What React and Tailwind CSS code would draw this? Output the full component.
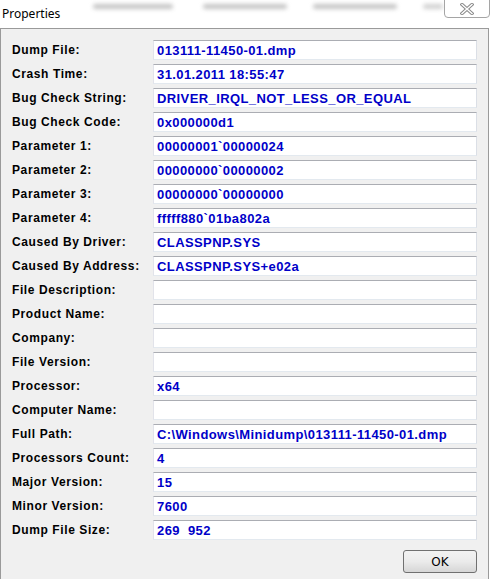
import React from "react";

const rows = [
  ["Dump File:", "013111-11450-01.dmp"],
  ["Crash Time:", "31.01.2011 18:55:47"],
  ["Bug Check String:", "DRIVER_IRQL_NOT_LESS_OR_EQUAL"],
  ["Bug Check Code:", "0x000000d1"],
  ["Parameter 1:", "00000001`00000024"],
  ["Parameter 2:", "00000000`00000002"],
  ["Parameter 3:", "00000000`00000000"],
  ["Parameter 4:", "fffff880`01ba802a"],
  ["Caused By Driver:", "CLASSPNP.SYS"],
  ["Caused By Address:", "CLASSPNP.SYS+e02a"],
  ["File Description:", ""],
  ["Product Name:", ""],
  ["Company:", ""],
  ["File Version:", ""],
  ["Processor:", "x64"],
  ["Computer Name:", ""],
  ["Full Path:", "C:\\Windows\\Minidump\\013111-11450-01.dmp"],
  ["Processors Count:", "4"],
  ["Major Version:", "15"],
  ["Minor Version:", "7600"],
  ["Dump File Size:", "269\u00a0\u00a0952"],
];

const CloseGlyph = () => (
  <svg width="14" height="12" viewBox="0 0 14 12">
    <path d="M2 1.5 L12 10.5 M12 1.5 L2 10.5" stroke="#8a8a8a" strokeWidth="3.4" strokeLinecap="square" />
    <path d="M2 1.5 L12 10.5 M12 1.5 L2 10.5" stroke="#ffffff" strokeWidth="1.4" strokeLinecap="square" />
  </svg>
);

const App = () => {
  return (
    <div className="w-[491px] h-[579px] bg-white overflow-hidden flex flex-col font-['Liberation_Sans',sans-serif]">
      {/* title bar */}
      <div className="relative h-[28px] shrink-0 flex items-center pl-[2px]">
        <span className="text-[12px] text-black font-['Noto_Sans',sans-serif] leading-none">Properties</span>
        <div className="absolute top-[4px] left-[93px] w-[80px] h-[5px] rounded-full bg-[#c4c4c4] blur-[2px]" />
        <div className="absolute top-[4px] left-[203px] w-[84px] h-[5px] rounded-full bg-[#c4c4c4] blur-[2px]" />
        <div className="absolute top-[4px] left-[313px] w-[84px] h-[5px] rounded-full bg-[#c4c4c4] blur-[2px]" />
        <div className="absolute top-[4px] left-[423px] w-[20px] h-[5px] rounded-full bg-[#d0d0d0] blur-[2px]" />
        <div className="absolute top-[-1px] left-[444px] w-[46px] h-[19px] border border-[#a5a5a5] rounded-b-[4px] bg-white flex items-center justify-center">
          <CloseGlyph />
        </div>
      </div>

      {/* content panel */}
      <div className="flex-1 bg-[#f0f0f0] border-t border-l border-r border-[#9a9a9a] mr-[2px] pt-[11px] pl-[11px] pr-[11px] flex flex-col">
        <div className="flex flex-col gap-[4px]">
          {rows.map(([label, value]) => (
            <div key={label} className="flex items-center h-[20px]">
              <div className="w-[141px] shrink-0 text-[12px] font-bold tracking-[0.6px] text-black leading-none">
                {label}
              </div>
              <div className="w-[324px] h-[20px] bg-white border border-t-[#abadb3] border-l-[#e2e3ea] border-r-[#dbdfe6] border-b-[#e3e9ef] flex items-center pl-[3px]">
                <span className="text-[13px] font-bold tracking-[0.4px] text-[#0000c8] leading-none whitespace-nowrap">
                  {value}
                </span>
              </div>
            </div>
          ))}
        </div>
        <div className="flex justify-end mt-[10px]">
          <button className="w-[74px] h-[23px] rounded-[3px] border border-[#707070] bg-gradient-to-b from-[#f2f2f2] via-[#ebebeb] to-[#d6d6d6] text-[12px] text-black font-['DejaVu_Sans',sans-serif] leading-none">
            OK
          </button>
        </div>
      </div>
    </div>
  );
};

export default App;
